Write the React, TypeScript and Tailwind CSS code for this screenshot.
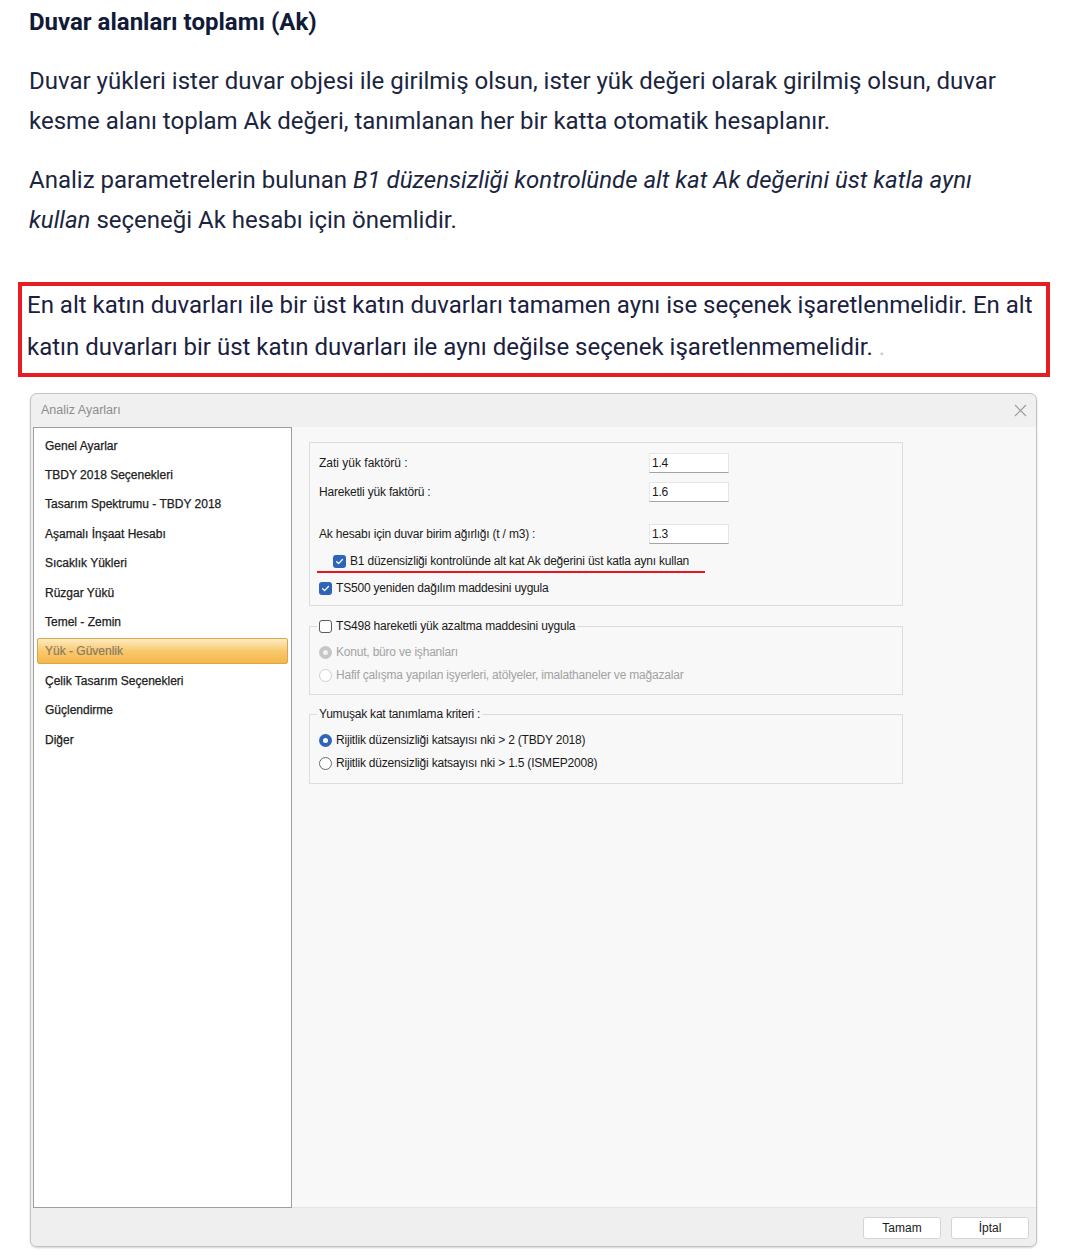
import React from "react";

const navItems = [
  "Genel Ayarlar",
  "TBDY 2018 Seçenekleri",
  "Tasarım Spektrumu - TBDY 2018",
  "Aşamalı İnşaat Hesabı",
  "Sıcaklık Yükleri",
  "Rüzgar Yükü",
  "Temel - Zemin",
  "Yük - Güvenlik",
  "Çelik Tasarım Seçenekleri",
  "Güçlendirme",
  "Diğer",
];

const Check = ({ checked }: { checked: boolean }) =>
  checked ? (
    <span className="w-[13px] h-[13px] rounded-[3px] bg-[#2f64bb] flex items-center justify-center shrink-0">
      <svg width="9" height="9" viewBox="0 0 10 10">
        <path d="M1.8 5.2 L4 7.3 L8.3 2.8" fill="none" stroke="#fff" strokeWidth="1.4" strokeLinecap="round" strokeLinejoin="round" />
      </svg>
    </span>
  ) : (
    <span className="w-[13px] h-[13px] rounded-[3px] border border-[#5c5c5c] bg-white shrink-0" />
  );

const Radio = ({ state }: { state: "on" | "off" | "dis-on" | "dis-off" }) => {
  if (state === "on")
    return (
      <span className="w-[13px] h-[13px] rounded-full bg-[#2f64bb] flex items-center justify-center shrink-0">
        <span className="w-[5px] h-[5px] rounded-full bg-white" />
      </span>
    );
  if (state === "dis-on")
    return (
      <span className="w-[13px] h-[13px] rounded-full bg-[#c6c6c6] flex items-center justify-center shrink-0">
        <span className="w-[5px] h-[5px] rounded-full bg-[#f3f3f3]" />
      </span>
    );
  return (
    <span
      className={
        "w-[13px] h-[13px] rounded-full border bg-white shrink-0 " +
        (state === "off" ? "border-[#6a6a6a]" : "border-[#cfcfcf]")
      }
    />
  );
};

const NumInput = ({ value }: { value: string }) => (
  <div className="w-[80px] h-[20px] bg-white border border-[#e6e6e6] border-b-[#a3a3a3] px-[2px] leading-[18px] text-[12px]">
    {value}
  </div>
);

export default function App() {
  return (
    <div className="w-[1069px] min-h-[1255px] bg-white font-['Roboto',sans-serif] text-[#1b2540]">
      <div className="pl-[29px] pr-[20px] pt-[8px]">
        <h2 className="text-[24px] leading-[28px] font-bold text-[#111b39]">Duvar alanları toplamı (Ak)</h2>
        <p className="mt-[25px] text-[24px] leading-[40px] whitespace-nowrap">
          Duvar yükleri ister duvar objesi ile girilmiş olsun, ister yük değeri olarak girilmiş olsun, duvar
          <br />
          kesme alanı toplam Ak değeri, tanımlanan her bir katta otomatik hesaplanır.
        </p>
        <p className="mt-[19px] text-[24px] leading-[40px] whitespace-nowrap">
          Analiz parametrelerin bulunan <i>B1 düzensizliği kontrolünde alt kat Ak değerini üst katla aynı</i>
          <br />
          <i>kullan</i> seçeneği Ak hesabı için önemlidir.
        </p>
      </div>

      <div className="ml-[18px] mt-[42px] w-[1032px] h-[95px] border-[4px] border-[#e61d25] pl-[5px]">
        <p className="-mt-[2px] text-[24px] leading-[42px] whitespace-nowrap text-[#1a2140]">
          En alt katın duvarları ile bir üst katın duvarları tamamen aynı ise seçenek işaretlenmelidir. En alt
          <br />
          katın duvarları bir üst katın duvarları ile aynı değilse seçenek işaretlenmemelidir. <span className="text-[#c8c8c8]">.</span>
        </p>
      </div>

      <div className="ml-[30px] mt-[16px] w-[1007px] h-[854px] border border-[#c3c3c3] rounded-[7px] bg-[#f0f0f0] shadow-[0_1px_2px_rgba(0,0,0,0.18)] flex flex-col overflow-hidden font-['Liberation_Sans',Arial,sans-serif] text-[12px] text-[#1a1a1a]">
        <div className="h-[33px] shrink-0 flex items-center justify-between pl-[10px] pr-[9px]">
          <span className="text-[12.5px] text-[#8d8d8d]">Analiz Ayarları</span>
          <svg width="13" height="13" viewBox="0 0 13 13">
            <path d="M1 1 L12 12 M12 1 L1 12" stroke="#9a9a9a" strokeWidth="1.1" />
          </svg>
        </div>

        <div className="flex h-[781px] shrink-0">
          <div className="ml-[2px] w-[259px] h-full bg-white border border-[#9e9e9e] pt-[3px]">
            {navItems.map((item) =>
              item === "Yük - Güvenlik" ? (
                <div key={item} className="h-[29.4px] flex items-center px-[3px]">
                  <div className="w-full h-[26px] rounded-[2px] border border-[#d9a550] bg-gradient-to-b from-[#fdebc0] via-[#f9c96e] to-[#f5b748] flex items-center pl-[7px] text-[#8a7a62] [-webkit-text-stroke:0.2px_#8a7a62]">
                    {item}
                  </div>
                </div>
              ) : (
                <div key={item} className="h-[29.4px] flex items-center pl-[11px] text-[#202020] [-webkit-text-stroke:0.25px_#202020]">
                  {item}
                </div>
              )
            )}
          </div>

          <div className="flex-1 bg-[#f8f8f8] border-b border-[#e4e4e4] pl-[17px] pt-[15px] tracking-[-0.2px]">
            <div className="w-[594px] h-[164px] border border-[#dcdcdc] pt-[10px] pl-[9px]">
              <div className="flex items-center h-[20px]">
                <span className="w-[330px] tracking-normal">Zati yük faktörü :</span>
                <NumInput value="1.4" />
              </div>
              <div className="flex items-center h-[20px] mt-[9px]">
                <span className="w-[330px]">Hareketli yük faktörü :</span>
                <NumInput value="1.6" />
              </div>
              <div className="flex items-center h-[20px] mt-[22px]">
                <span className="w-[330px]">Ak hesabı için duvar birim ağırlığı (t / m3) :</span>
                <NumInput value="1.3" />
              </div>
              <div className="flex items-center h-[16px] mt-[9px] pl-[14px] gap-[4px]">
                <Check checked />
                <span>B1 düzensizliği kontrolünde alt kat Ak değerini üst katla aynı kullan</span>
              </div>
              <div className="-ml-[2px] mt-[2px] w-[388px] h-[2px] bg-[#e8131b]" />
              <div className="flex items-center h-[16px] mt-[7px] gap-[4px]">
                <Check checked={true} />
                <span>TS500 yeniden dağılım maddesini uygula</span>
              </div>
            </div>

            <fieldset className="w-[594px] mt-[12px] border border-[#dcdcdc] pl-[9px] pb-[11px]">
              <legend className="-ml-[2px] px-[2px] h-[16px] flex items-center gap-[4px]">
                <Check checked={false} />
                <span>TS498 hareketli yük azaltma maddesini uygula</span>
              </legend>
              <div className="flex items-center h-[16px] mt-[10px] gap-[4px] text-[#a2a2a2]">
                <Radio state="dis-on" />
                <span>Konut, büro ve işhanları</span>
              </div>
              <div className="flex items-center h-[16px] mt-[7px] gap-[4px] text-[#a2a2a2]">
                <Radio state="dis-off" />
                <span>Hafif çalışma yapılan işyerleri, atölyeler, imalathaneler ve mağazalar</span>
              </div>
            </fieldset>

            <fieldset className="w-[594px] mt-[11px] border border-[#dcdcdc] pl-[9px] pb-[12px]">
              <legend className="-ml-[2px] px-[2px] h-[16px] leading-[16px]">Yumuşak kat tanımlama kriteri :</legend>
              <div className="flex items-center h-[16px] mt-[10px] gap-[4px]">
                <Radio state="on" />
                <span>Rijitlik düzensizliği katsayısı nki &gt; 2 (TBDY 2018)</span>
              </div>
              <div className="flex items-center h-[16px] mt-[7px] gap-[4px]">
                <Radio state="off" />
                <span>Rijitlik düzensizliği katsayısı nki &gt; 1.5 (ISMEP2008)</span>
              </div>
            </fieldset>
          </div>
        </div>

        <div className="flex-1 flex justify-end items-start pt-[9px] pr-[7px] gap-[10px] bg-[#efefef]">
          <button className="w-[78px] h-[22px] bg-white border border-[#d4d4d4] rounded-[3px] text-[12px] text-[#1a1a1a]">Tamam</button>
          <button className="w-[78px] h-[22px] bg-white border border-[#d4d4d4] rounded-[3px] text-[12px] text-[#1a1a1a]">İptal</button>
        </div>
      </div>
    </div>
  );
}
